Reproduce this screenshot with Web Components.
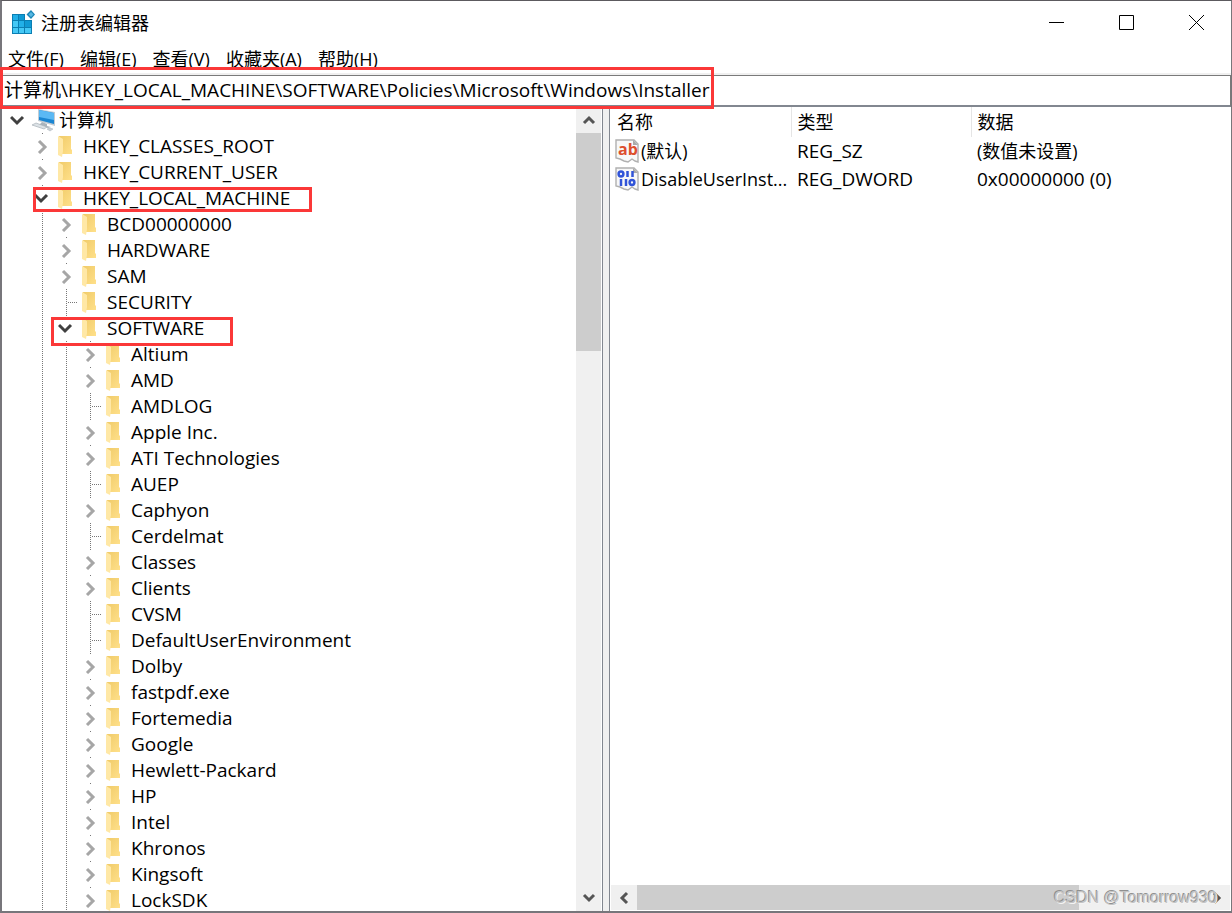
<!DOCTYPE html>
<html lang="zh-CN">
<head>
<meta charset="utf-8">
<title>注册表编辑器</title>
<style>
  html, body { margin: 0; height: 100%; }
  body {
    font: 18px/26px "Open Sans", "Noto Sans CJK SC", sans-serif;
    color: #000; background: #fff; overflow: hidden;
  }
</style>
</head>
<body>
<reg-window>
  <reg-titlebar slot="title">注册表编辑器</reg-titlebar>
  <reg-menubar slot="menu">
    <reg-menu>文件(F)</reg-menu>
    <reg-menu>编辑(E)</reg-menu>
    <reg-menu>查看(V)</reg-menu>
    <reg-menu>收藏夹(A)</reg-menu>
    <reg-menu>帮助(H)</reg-menu>
  </reg-menubar>
  <reg-address slot="address" value="计算机\HKEY_LOCAL_MACHINE\SOFTWARE\Policies\Microsoft\Windows\Installer">
    <reg-mark style="--x:-2px;--y:-8px;--w:714px;--h:42px"></reg-mark>
  </reg-address>
  <reg-tree slot="tree">
    <reg-node label="计算机" icon="computer" state="open" root>
      <reg-node label="HKEY_CLASSES_ROOT" state="closed"></reg-node>
      <reg-node label="HKEY_CURRENT_USER" state="closed"></reg-node>
      <reg-node label="HKEY_LOCAL_MACHINE" state="open">
        <reg-mark slot="mark" style="--x:3px;--y:2px;--w:279px;--h:25px"></reg-mark>
        <reg-node label="BCD00000000" state="closed"></reg-node>
        <reg-node label="HARDWARE" state="closed"></reg-node>
        <reg-node label="SAM" state="closed"></reg-node>
        <reg-node label="SECURITY"></reg-node>
        <reg-node label="SOFTWARE" state="open">
          <reg-mark slot="mark" style="--x:-3px;--y:2px;--w:182px;--h:29px"></reg-mark>
          <reg-node label="Altium" state="closed"></reg-node>
          <reg-node label="AMD" state="closed"></reg-node>
          <reg-node label="AMDLOG"></reg-node>
          <reg-node label="Apple Inc." state="closed"></reg-node>
          <reg-node label="ATI Technologies" state="closed"></reg-node>
          <reg-node label="AUEP"></reg-node>
          <reg-node label="Caphyon" state="closed"></reg-node>
          <reg-node label="Cerdelmat"></reg-node>
          <reg-node label="Classes" state="closed"></reg-node>
          <reg-node label="Clients" state="closed"></reg-node>
          <reg-node label="CVSM"></reg-node>
          <reg-node label="DefaultUserEnvironment"></reg-node>
          <reg-node label="Dolby" state="closed"></reg-node>
          <reg-node label="fastpdf.exe" state="closed"></reg-node>
          <reg-node label="Fortemedia" state="closed"></reg-node>
          <reg-node label="Google" state="closed"></reg-node>
          <reg-node label="Hewlett-Packard" state="closed"></reg-node>
          <reg-node label="HP" state="closed"></reg-node>
          <reg-node label="Intel" state="closed"></reg-node>
          <reg-node label="Khronos" state="closed"></reg-node>
          <reg-node label="Kingsoft" state="closed"></reg-node>
          <reg-node label="LockSDK" state="closed"></reg-node>
        </reg-node>
      </reg-node>
    </reg-node>
  </reg-tree>
  <reg-values slot="values"></reg-values>
  <reg-watermark slot="watermark">CSDN @Tomorrow930</reg-watermark>
</reg-window>

<script>
const define = (name, html, setup) => {
  const template = document.createElement('template');
  template.innerHTML = html;
  customElements.define(name, class extends HTMLElement {
    constructor() {
      super();
      this.attachShadow({ mode: 'open' }).append(template.content.cloneNode(true));
    }
    connectedCallback() { if (setup) setup(this, this.shadowRoot); }
  });
};

/* Window frame: title, menu, address, then two panes with a splitter */
define('reg-window', `
<style>
  :host {
    display: flex; flex-direction: column; position: relative;
    height: 100vh; box-sizing: border-box; background: #fff;
    border: solid #77767b; border-width: 1px 1px 2px 2px; border-top-color: #5c5a5e;
  }
  main { flex: 1; min-height: 0; display: grid; grid-template-columns: minmax(200px, 601fr) 6px minmax(0, 622fr); background: #f0f0f0; }
  .tree, .values { min-width: 0; min-height: 0; display: grid; background: #fff; }
  .tree { border-right: 1px solid #828790; }
  .values { border-left: 1px solid #828790; }
</style>
<slot name="title"></slot>
<slot name="menu"></slot>
<slot name="address"></slot>
<main>
  <section class="tree"><slot name="tree"></slot></section>
  <div></div>
  <section class="values"><slot name="values"></slot></section>
</main>
<slot name="watermark"></slot>`);

define('reg-titlebar', `
<style>
  :host { display: flex; align-items: center; height: 43px; padding: 0 0 2px 8px; flex: none; }
  h1 { flex: 1; margin: 0 0 0 6px; font: inherit; }
  .logo { width: 25px; height: 26px; }
  button { width: 70px; height: 43px; padding: 0; border: 0; background: none; display: grid; place-items: center; }
  button svg { width: 15px; height: 15px; fill: none; stroke: #000; }
</style>
<svg class="logo" viewBox="0 0 25 26" aria-hidden="true">
  <path fill="#0b7fb3" d="M2 4h13v6h7v14H2z"/>
  <path fill="#45c8f5" d="M3 11h5v6H3zM3 18h5v5H3zM9 18h5v5H9zM15 18h6v5h-6z"/>
  <path fill="#22b0e8" d="M3 5h5v5H3zM9 11h5v6H9z"/>
  <path fill="#109ad4" d="M9 5h5v5H9zM15 11h6v6h-6z"/>
  <path fill="#1a86b8" d="M21 0l4 4.500L21 9l-4.500-4.500z"/>
  <path fill="#57b7e2" d="M21 2l2.500 2.500L21 7l-2.500-2.500z"/>
</svg>
<h1><slot></slot></h1>
<button aria-label="最小化"><svg viewBox="0 0 15 15"><path d="M0 7.500h15"/></svg></button>
<button aria-label="最大化"><svg viewBox="0 0 15 15"><path d="M.5.5h14v14H.5z"/></svg></button>
<button aria-label="关闭"><svg viewBox="0 0 15 15"><path d="M0 0l15 15M15 0L0 15"/></svg></button>`);

define('reg-menubar', `
<style>:host { display: flex; gap: 16px; height: 27px; padding-left: 6px; flex: none; border-bottom: 2px solid #f0f0f0; }</style>
<slot></slot>`);

define('reg-menu', `
<style>
  :host { display: block; }
  button { font: inherit; color: inherit; background: none; border: 0; padding: 0; white-space: nowrap; height: 26px; }
</style>
<button><slot></slot></button>`);

define('reg-address', `
<style>
  :host { display: block; position: relative; flex: none; }
  input {
    display: block; box-sizing: border-box; width: 100%; height: 32px; margin: 0; padding: 0 3px 3px 2px;
    border: solid #7a7a7a; border-width: 1px 1px 2px 0; border-bottom-color: #828790;
    font: inherit; font-size: 19px; color: inherit; outline: 0; background: #fff;
  }
</style>
<input type="text" aria-label="地址">
<slot></slot>`, (host, root) => { root.querySelector('input').value = host.getAttribute('value'); });

/* Red highlight frame laid over its positioned parent */
define('reg-mark', `
<style>
  :host {
    position: absolute; left: var(--x); top: var(--y); width: var(--w); height: var(--h);
    box-sizing: border-box; border: 3px solid #fb3838; pointer-events: none; z-index: 2;
  }
</style>`);

define('reg-scrollbar', `
<style>
  :host { display: flex; flex-direction: column; background: #f0f0f0; min-width: 0; min-height: 0; }
  :host([horizontal]) { flex-direction: row; }
  button { flex: none; width: 25px; height: 26px; padding: 0; border: 0; background: none; display: grid; place-items: center; }
  :host([horizontal]) button { width: 26px; height: 25px; }
  .track { flex: 1; min-width: 0; min-height: 0; }
  .thumb { background: #cdcdcd; height: var(--thumb); }
  :host([horizontal]) .thumb { width: var(--thumb); height: 100%; }
  svg { width: 14px; height: 14px; fill: none; stroke: #555; stroke-width: 3; }
  :host([horizontal]) svg { transform: rotate(-90deg); }
  .end svg { transform: rotate(180deg); }
  :host([horizontal]) .end svg { transform: rotate(90deg); }
</style>
<button aria-label="向前滚动"><svg viewBox="0 0 14 14"><path d="M2 10l5-5 5 5"/></svg></button>
<div class="track"><div class="thumb"></div></div>
<button class="end" aria-label="向后滚动"><svg viewBox="0 0 14 14"><path d="M2 10l5-5 5 5"/></svg></button>`);

define('reg-tree', `
<style>
  :host { display: grid; grid-template-columns: minmax(0, 1fr) 25px; min-height: 0; padding-right: 1px; }
  .nodes { overflow: hidden; padding-left: 4px; }
  reg-scrollbar { --thumb: 29%; }
</style>
<div class="nodes" role="tree"><slot></slot></div>
<reg-scrollbar></reg-scrollbar>`);

const folder = `<svg viewBox="0 0 24 24"><defs><linearGradient id="f" x2="1" y2="1"><stop stop-color="#f0cb69"/><stop offset="1" stop-color="#ffe08a"/></linearGradient></defs>
  <path fill="url(#f)" d="M3 2h12v13l1 1v4H5z"/><path fill="#ffe8a6" d="M2 2l5 3v12l-1 6-4-2z"/></svg>`;
const computer = `<svg viewBox="0 0 24 24">
  <path fill="#c4ccd3" d="M6 1l17 3v14L6 13z"/><path fill="#1b86d2" d="M7 2l15 3v11L7 12z"/><path fill="#5bb9f4" d="M7 2l15 3v7L7 9z"/>
  <path fill="#aab4bc" d="M10 14l5 2v2l4 1-3 1-9-3z"/><path fill="#dce2e6" stroke="#a7b0b8" stroke-width=".7" d="M0 17l4-2 11 4-3 2z"/>
  <path fill="#c9d0d6" stroke="#a7b0b8" stroke-width=".5" d="M15 21l3-1 3 1-3 2z"/></svg>`;

/* Tree entry; children go in the default slot, one indent step further */
define('reg-node', `
<style>
  :host { display: block; background: repeating-linear-gradient(#777 0 1px, #fff 1px 2px) 12px 0 / 1px 100% no-repeat; }
  :host([root]) { background: none; }
  .row { position: relative; display: flex; height: 26px; white-space: nowrap; }
  .lead { width: 24px; margin-right: 2px; flex: none; display: grid; place-items: center; }
  button { display: none; width: 20px; height: 24px; padding: 0; border: 0; background: #fff; }
  :host([state]) button { display: grid; place-items: center; }
  svg { display: block; width: 24px; height: 24px; }
  button svg { width: 16px; height: 16px; fill: none; stroke: #a6a6a6; stroke-width: 3; }
  :host([state=open]) button svg { transform: rotate(90deg); stroke: #404040; }
  :host(:not([state])) .lead::before {
    content: ""; width: 10px; height: 1px; justify-self: end;
    background: repeating-linear-gradient(90deg, #777 0 1px, #fff 1px 2px);
  }
  .icon { width: 24px; margin: 1px 3px 0 0; flex: none; }
  .label { font-size: 19px; }
  :host([root]) .label { font-size: 18px; }
  .kids { padding-left: 24px; }
</style>
<div class="row">
  <span class="lead"><button aria-label="展开或折叠"><svg viewBox="0 0 16 16"><path d="M5 3l6 6-6 6"/></svg></button></span>
  <span class="icon"></span><span class="label"></span>
  <slot name="mark"></slot>
</div>
<div class="kids" role="group"><slot></slot></div>`, (host, root) => {
  host.setAttribute('role', 'treeitem');
  root.querySelector('.label').textContent = host.getAttribute('label');
  root.querySelector('.icon').innerHTML = host.getAttribute('icon') === 'computer' ? computer : folder;
});

/* Value icons: a torn sheet with either red letters or blue bits */
define('reg-value-icon', `
<style>
  :host { display: block; width: 24px; height: 24px; flex: none; position: relative; }
  svg { display: block; }
  b { position: absolute; left: 3px; top: 0; font: 700 16px/20px "Open Sans", sans-serif; color: #dd4f2d; }
  .bits { display: none; }
  :host([kind=binary]) .bits { display: block; }
</style>
<svg width="24" height="24" viewBox="0 0 24 24" aria-hidden="true">
  <path fill="#f8f8f8" stroke="#b0b0b0" stroke-width="1.400" d="M1 1h18l4 4v18l-3-1-3-2-4 3-4-1-4-2-4-1z"/>
  <path fill="#aaa" d="M18 1v5h5z"/>
  <g class="bits" fill="none" stroke="#3154d8" stroke-width="2.500">
    <circle cx="6" cy="7" r="2.400"/><path d="M12.500 4v6M17.500 4v6M6 12v7M11 12v7"/><circle cx="17" cy="15.500" r="2.400"/>
  </g>
</svg>`, (host, root) => {
  if (host.getAttribute('kind') === 'string') {
    const b = document.createElement('b');
    b.textContent = 'ab';
    root.append(b);
  }
});

define('reg-values', `
<style>
  :host { display: grid; grid-template-rows: minmax(0, 1fr) 25px; min-width: 0; padding: 0 1px 1px 1px; }
  .list { overflow: hidden; }
  table { width: 100%; table-layout: fixed; border-collapse: collapse; }
  .fixed { width: 180px; }
  th, td { font: inherit; text-align: left; padding: 0 0 0 6px; white-space: nowrap; }
  th { height: 30px; }
  th + th { border-left: 1px solid #e5e5e5; }
  td { height: 28px; }
  td:first-child { padding-left: 4px; }
  .latin { font-size: 19px; }
  .name { display: flex; align-items: center; gap: 2px; }
  reg-scrollbar { --thumb: 78%; }
</style>
<div class="list">
  <table>
    <colgroup><col class="fixed"><col class="fixed"><col></colgroup>
    <thead><tr><th scope="col">名称</th><th scope="col">类型</th><th scope="col">数据</th></tr></thead>
    <tbody>
      <tr><td><div class="name"><reg-value-icon kind="string"></reg-value-icon>(默认)</div></td><td class="latin">REG_SZ</td><td>(数值未设置)</td></tr>
      <tr><td><div class="name"><reg-value-icon kind="binary"></reg-value-icon>DisableUserInst...</div></td><td class="latin">REG_DWORD</td><td class="latin">0x00000000 (0)</td></tr>
    </tbody>
  </table>
</div>
<reg-scrollbar horizontal></reg-scrollbar>`);

define('reg-watermark', `
<style>
  :host {
    position: absolute; right: 14px; bottom: 2px; z-index: 3; pointer-events: none;
    font: 16px/22px "Liberation Sans", Arial, sans-serif; color: #c4c4c4;
    text-shadow: -1px -1px 0 #909090, 1px 1px 0 #f4f4f4;
  }
</style>
<slot></slot>`);
</script>
</body>
</html>
